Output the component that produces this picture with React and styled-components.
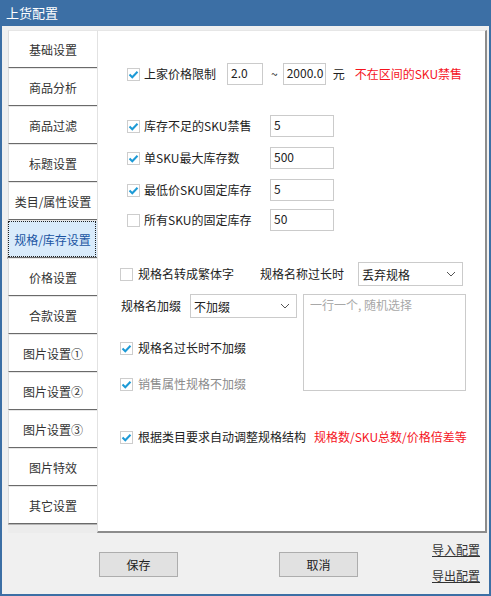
import React from "react"
import styled, { createGlobalStyle } from "styled-components"

const GlobalStyle = createGlobalStyle`
	body {
		margin: 0;
		font-family: "Noto Sans CJK SC", "Noto Sans", sans-serif;
		font-size: 12px;
		color: #222;
	}
`

const Window = styled.div`
	width: 491px;
	height: 596px;
	box-sizing: border-box;
	background: #f0f0f0;
	border: 2px solid #3c6fa5;
	border-top: 0;
	display: flex;
	flex-direction: column;
`

const TitleBar = styled.div`
	height: 26px;
	margin: 0 -2px;
	padding-left: 6px;
	background: #3c6fa5;
	color: #fff;
	font-size: 13px;
	line-height: 26px;
`

const Main = styled.div`
	display: flex;
	padding: 4px 2px 0 6px;
	height: 506px;
`

const TabList = styled.div`
	width: 89px;
	display: flex;
	flex-direction: column;
	background: #ececec;
	height: 503px;
`

const Tab = styled.div`
	height: 38px;
	box-sizing: border-box;
	display: flex;
	align-items: center;
	justify-content: center;
	white-space: nowrap;
	background: ${(p) => (p.$active ? "#d9ebfb" : "#fff")};
	color: ${(p) => (p.$active ? "#1b55a3" : "#333")};
	border-left: 1px solid #dcdcdc;
	border-top: 1px solid #e6e6e6;
	border-bottom: 1px solid #6a6a6a;
	box-shadow: 0 1px 0 #b5b5b5;
	outline: ${(p) => (p.$active ? "1px dotted #222" : "none")};
	outline-offset: -2px;
	margin-left: ${(p) => (p.$active ? "-1px" : "0")};
`

const Panel = styled.div`
	flex: 1;
	background: #fff;
	border-left: 1px solid #e2e2e2;
	border-top: 1px solid #e6e6e6;
	border-right: 2px solid #8c8c8c;
	border-bottom: 2px solid #8c8c8c;
	box-sizing: border-box;
	height: 503px;
	display: flex;
	flex-direction: column;
`

const Section = styled.div`
	display: flex;
	flex-direction: column;
	margin-top: ${(p) => p.$mt}px;
	padding-left: ${(p) => p.$pl}px;
`

const Row = styled.div`
	display: flex;
	align-items: center;
	height: ${(p) => p.$h || 22}px;
	margin-top: ${(p) => p.$mt || 0}px;
	white-space: nowrap;
`

const Box = styled.span`
	width: 13px;
	height: 13px;
	box-sizing: border-box;
	border: 1px solid #cdcdcd;
	background: #fff;
	display: inline-flex;
	align-items: center;
	justify-content: center;
	flex-shrink: 0;
`

const Label = styled.span`
	margin-left: ${(p) => p.$ml ?? 4}px;
	width: ${(p) => (p.$w ? `${p.$w}px` : "auto")};
	color: ${(p) => (p.$muted ? "#8b8b8b" : "#222")};
	line-height: 16px;
`

const Text = styled.span`
	margin-left: ${(p) => p.$ml || 0}px;
	color: ${(p) => (p.$red ? "#f5141e" : "#222")};
	line-height: 16px;
`

const Field = styled.div`
	width: ${(p) => p.$w}px;
	height: 22px;
	box-sizing: border-box;
	border: 1px solid #cbcbcb;
	background: #fff;
	padding: 0 3px;
	margin-left: ${(p) => p.$ml || 0}px;
	line-height: 18px;
	flex-shrink: 0;
`

const Select = styled.div`
	width: ${(p) => p.$w}px;
	height: 24px;
	box-sizing: border-box;
	border: 1px solid #cbcbcb;
	background: #fff;
	padding: 0 6px 0 3px;
	margin-left: ${(p) => p.$ml || 0}px;
	display: flex;
	align-items: center;
	justify-content: space-between;
	flex-shrink: 0;
`

const Split = styled.div`
	display: flex;
	align-items: flex-start;
	margin-top: 8px;
`

const LeftCol = styled.div`
	display: flex;
	flex-direction: column;
	width: 183px;
`

const TextArea = styled.div`
	width: 163px;
	height: 97px;
	box-sizing: border-box;
	border: 1px solid #cbcbcb;
	padding: 2px 6px;
	color: #a8a8a8;
	line-height: 16px;
`

const Footer = styled.div`
	flex: 1;
	display: flex;
	align-items: flex-start;
	padding: 6px 9px 0 97px;
`

const Button = styled.div`
	width: 79px;
	height: 25px;
	box-sizing: border-box;
	margin-top: 10px;
	margin-right: ${(p) => p.$mr || 0}px;
	border: 1px solid #adadad;
	background: #e1e1e1;
	display: flex;
	align-items: center;
	justify-content: center;
`

const Links = styled.div`
	margin-left: auto;
	display: flex;
	flex-direction: column;
	gap: 10px;
`

const Link = styled.span`
	color: #333;
	text-decoration: underline;
	line-height: 16px;
`

const Check = ({ on }) => (
	<Box>
		{on && (
			<svg width="11" height="11" viewBox="0 0 11 11">
				<polyline points="1.5,5.5 4.3,8.3 9.5,2.8" fill="none" stroke="#1d9ad6" strokeWidth="2" />
			</svg>
		)}
	</Box>
)

const Chevron = () => (
	<svg width="10" height="6" viewBox="0 0 10 6">
		<polyline points="1,1 5,5 9,1" fill="none" stroke="#555" strokeWidth="1" />
	</svg>
)

const tabs = [
	"基础设置",
	"商品分析",
	"商品过滤",
	"标题设置",
	"类目/属性设置",
	"规格/库存设置",
	"价格设置",
	"合款设置",
	"图片设置①",
	"图片设置②",
	"图片设置③",
	"图片特效",
	"其它设置",
]

const stock = [
	{ label: "库存不足的SKU禁售", value: "5", on: true, mt: 0 },
	{ label: "单SKU最大库存数", value: "500", on: true, mt: 10 },
	{ label: "最低价SKU固定库存", value: "5", on: true, mt: 10 },
	{ label: "所有SKU的固定库存", value: "50", on: false, mt: 8 },
]

export default function App() {
	return (
		<>
			<GlobalStyle />
			<Window>
				<TitleBar>上货配置</TitleBar>
				<Main>
					<TabList>
						{tabs.map((t) => (
							<Tab key={t} $active={t === "规格/库存设置"}>
								{t}
							</Tab>
						))}
					</TabList>
					<Panel>
						<Section $mt={32} $pl={29}>
							<Row>
								<Check on />
								<Label>上家价格限制</Label>
								<Field $w={36} $ml={11}>2.0</Field>
								<Text $ml={8}>~</Text>
								<Field $w={43} $ml={5}>2000.0</Field>
								<Text $ml={7}>元</Text>
								<Text $ml={10} $red>不在区间的SKU禁售</Text>
							</Row>
						</Section>
						<Section $mt={30} $pl={29}>
							{stock.map((s) => (
								<Row key={s.label} $mt={s.mt}>
									<Check on={s.on} />
									<Label $w={126}>{s.label}</Label>
									<Field $w={64}>{s.value}</Field>
								</Row>
							))}
						</Section>
						<Section $mt={31} $pl={22}>
							<Row $h={24}>
								<Check />
								<Label $ml={5}>规格名转成繁体字</Label>
								<Text $ml={26}>规格名称过长时</Text>
								<Select $w={105} $ml={14}>
									丢弃规格
									<Chevron />
								</Select>
							</Row>
							<Split>
								<LeftCol>
									<Row $h={24}>
										<Text $ml={1}>规格名加缀</Text>
										<Select $w={107} $ml={9}>
											不加缀
											<Chevron />
										</Select>
									</Row>
									<Row $h={20} $mt={20}>
										<Check on />
										<Label $ml={5}>规格名过长时不加缀</Label>
									</Row>
									<Row $h={20} $mt={16}>
										<Check on />
										<Label $ml={5} $muted>销售属性规格不加缀</Label>
									</Row>
								</LeftCol>
								<TextArea>一行一个, 随机选择</TextArea>
							</Split>
							<Row $h={20} $mt={33}>
								<Check on />
								<Label $ml={5}>根据类目要求自动调整规格结构</Label>
								<Text $ml={8} $red>规格数/SKU总数/价格倍差等</Text>
							</Row>
						</Section>
					</Panel>
				</Main>
				<Footer>
					<Button $mr={101}>保存</Button>
					<Button>取消</Button>
					<Links>
						<Link>导入配置</Link>
						<Link>导出配置</Link>
					</Links>
				</Footer>
			</Window>
		</>
	)
}
